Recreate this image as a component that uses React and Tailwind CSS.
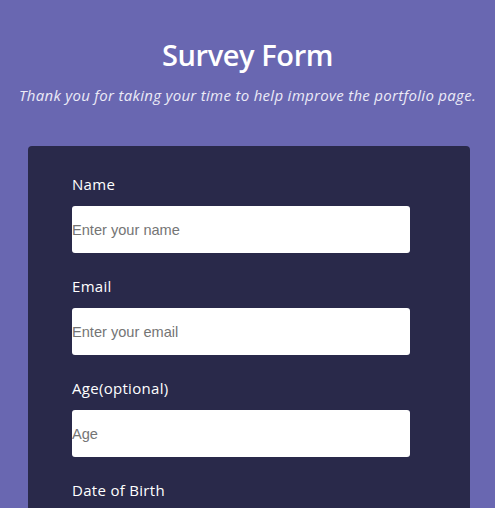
export default function App() {
  const fields = [
    { label: "Name", ph: "Enter your name" },
    { label: "Email", ph: "Enter your email" },
    { label: "Age(optional)", ph: "Age" },
  ];
  return (
    <div className="h-[508px] overflow-hidden bg-[#6967b1] pt-[36px] font-['Open_Sans',sans-serif] text-white">
      <h1 className="text-center text-[29px] leading-[38px] font-semibold tracking-[-0.4px]">Survey Form</h1>
      <p className="mt-[10px] text-center text-[15px] leading-[22px] italic text-[#ecebf7] tracking-[0.3px]">
        Thank you for taking your time to help improve the portfolio page.
      </p>
      <div className="ml-[28px] mt-[40px] w-[442px] rounded-t-[4px] bg-[#29294a] pl-[44px] pt-[27px] pb-10">
        {fields.map((f) => (
          <div key={f.label} className="mb-[22px]">
            <label className="block text-[15px] leading-[22px] tracking-[0.3px]">{f.label}</label>
            <input
              placeholder={f.ph}
              className="mt-[11px] block h-[47px] w-[338px] rounded-[3px] bg-white font-['Liberation_Sans',Arial,sans-serif] text-[14.6px] text-black placeholder:text-[#757575] outline-none"
            />
          </div>
        ))}
        <label className="block text-[15px] leading-[22px] tracking-[0.3px]">Date of Birth</label>
      </div>
    </div>
  );
}
